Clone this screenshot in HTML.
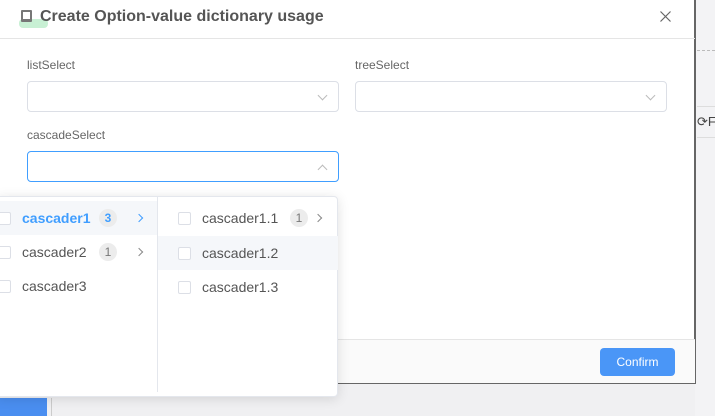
<!DOCTYPE html>
<html><head><style>
*{box-sizing:border-box;margin:0;padding:0}
body{width:715px;height:416px;overflow:hidden;background:#f0f0f2;font-family:"Liberation Sans",sans-serif;position:relative}
.abs{position:absolute}
.modal{left:-2px;top:-2px;width:698px;height:386px;background:#fff;border:2px solid #666;border-top:none;border-left:none}
.sel{position:absolute;height:31px;border:1px solid #dcdfe6;border-radius:4px;background:#fff}
.lbl{position:absolute;font-size:12px;color:#666}
.chev{position:absolute;right:12px;top:10px;width:7px;height:7px;border-right:1px solid #bbb;border-bottom:1px solid #bbb;transform:rotate(45deg)}
.row{position:absolute;height:34px;font-size:14px;color:#555;line-height:34px}
.cb{position:absolute;top:11px;width:13px;height:13px;border:1px solid #dcdfe6;border-radius:2px;background:#fff}
.badge{position:absolute;top:8px;width:18px;height:18px;border-radius:9px;background:#ececec;font-size:12px;text-align:center;line-height:18px;color:#777}
.arr{position:absolute;top:14px;width:6px;height:6px;border-right:1px solid #888;border-top:1px solid #888;transform:rotate(45deg)}
</style></head><body>
<div class="abs" style="left:695px;top:0;width:20px;height:416px;background:#f3f3f5"></div>
<div class="abs" style="left:697px;top:50px;width:18px;border-top:1px dashed #bbb"></div>
<div class="abs" style="left:697px;top:106px;width:18px;height:32px;border-top:1px solid #ddd;border-bottom:1px solid #ddd;font-size:13px;color:#444;line-height:30px">⟳F</div>
<div class="abs" style="left:0;top:398px;width:47px;height:18px;background:#4a8ef0"></div>
<div class="abs" style="left:51px;top:398px;width:1px;height:18px;background:#ccc"></div>
<div class="abs modal"></div>
<div class="abs" style="left:0;top:38px;width:695px;height:1px;background:#e5e5e5"></div>
<div class="abs" style="left:19px;top:19px;width:29px;height:9px;background:#c8f0d4;border-radius:4px"></div>
<div class="abs" style="left:21px;top:10px;width:11px;height:12px;border:2px solid #777;border-bottom-width:3px;border-radius:1px"></div>
<div class="abs" style="left:40px;top:8px;font-size:16px;font-weight:bold;color:#555">Create Option-value dictionary usage</div>
<svg class="abs" style="left:660px;top:11px" width="11" height="11"><path d="M0.5 0.5L10.5 10.5M10.5 0.5L0.5 10.5" stroke="#666" stroke-width="1.2"/></svg>
<div class="lbl" style="left:27px;top:58px">listSelect</div>
<div class="sel" style="left:27px;top:81px;width:312px"><div class="chev"></div></div>
<div class="lbl" style="left:355px;top:58px">treeSelect</div>
<div class="sel" style="left:355px;top:81px;width:312px"><div class="chev"></div></div>
<div class="lbl" style="left:27px;top:128px">cascadeSelect</div>
<div class="sel" style="left:27px;top:151px;width:312px;border-color:#409eff"><div class="chev" style="transform:rotate(225deg);top:14px"></div></div>
<div class="abs" style="left:0;top:339px;width:695px;height:44px;background:#fafafa;border-top:1px solid #e5e5e5"></div>
<div class="abs" style="left:600px;top:348px;width:75px;height:28px;background:#4a96f7;border-radius:4px;color:#fff;font-size:12px;text-align:center;line-height:28px">Confirm</div>
<div class="abs" style="left:-4px;top:196px;width:342px;height:201px;background:#fff;border:1px solid #e4e7ed;border-radius:4px;box-shadow:0 2px 12px rgba(0,0,0,.12)"></div>
<div class="abs" style="left:157px;top:197px;width:1px;height:195px;background:#e4e7ed"></div>
<div class="row" style="left:0;top:201px;width:157px;background:#f5f7fa;color:#409eff;font-weight:bold"><div class="cb" style="left:-2px"></div><span class="abs" style="left:22px">cascader1</span><div class="badge" style="left:99px;color:#409eff">3</div><div class="arr" style="left:136px;border-color:#409eff"></div></div>
<div class="row" style="left:0;top:235px;width:157px"><div class="cb" style="left:-2px"></div><span class="abs" style="left:22px">cascader2</span><div class="badge" style="left:99px">1</div><div class="arr" style="left:136px"></div></div>
<div class="row" style="left:0;top:269px;width:157px"><div class="cb" style="left:-2px"></div><span class="abs" style="left:22px">cascader3</span></div>
<div class="row" style="left:158px;top:201px;width:180px"><div class="cb" style="left:20px"></div><span class="abs" style="left:44px">cascader1.1</span><div class="badge" style="left:132px">1</div><div class="arr" style="left:157px"></div></div>
<div class="row" style="left:158px;top:236px;width:180px;background:#f5f7fa"><div class="cb" style="left:20px"></div><span class="abs" style="left:44px">cascader1.2</span></div>
<div class="row" style="left:158px;top:270px;width:180px"><div class="cb" style="left:20px"></div><span class="abs" style="left:44px">cascader1.3</span></div>
</body></html>
